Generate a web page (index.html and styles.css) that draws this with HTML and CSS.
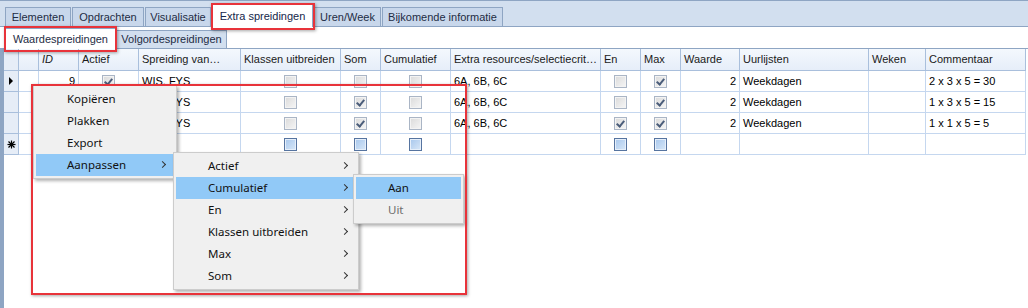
FILE: index.html
```html
<!DOCTYPE html>
<html lang="nl">
<head>
    <meta charset="UTF-8">
    <title>Extra spreidingen</title>
    <link rel="stylesheet" href="styles.css">
</head>
<body>
    <div class="page">
        <!-- Main tabs -->
        <div class="tabstrip">
            <div class="tab" style="width:66px">Elementen</div>
            <div class="tab" style="width:72px">Opdrachten</div>
            <div class="tab" style="width:66px">Visualisatie</div>
            <div class="tab active" style="width:101px">Extra spreidingen</div>
            <div class="tab" style="width:67px">Uren/Week</div>
            <div class="tab" style="width:121px">Bijkomende informatie</div>
        </div>

        <!-- Sub tabs -->
        <div class="subtabs">
            <div class="subtab active">Waardespreidingen</div>
            <div class="subtab">Volgordespreidingen</div>
        </div>

        <!-- Grid -->
        <div class="grid">
            <div class="row head">
                <div class="cell ind"></div>
                <div class="cell"></div>
                <div class="cell"><i>ID</i></div>
                <div class="cell">Actief</div>
                <div class="cell">Spreiding van…</div>
                <div class="cell">Klassen uitbreiden</div>
                <div class="cell">Som</div>
                <div class="cell">Cumulatief</div>
                <div class="cell">Extra resources/selectiecrit…</div>
                <div class="cell">En</div>
                <div class="cell">Max</div>
                <div class="cell">Waarde</div>
                <div class="cell">Uurlijsten</div>
                <div class="cell">Weken</div>
                <div class="cell">Commentaar</div>
            </div>

            <div class="row">
                <div class="cell ind">
                    <svg width="5" height="8" viewBox="0 0 5 8"><polygon points="0,0 4,4 0,8" fill="#000"/></svg>
                </div>
                <div class="cell"></div>
                <div class="cell num">9</div>
                <div class="cell mid"><span class="cb on"></span></div>
                <div class="cell">WIS, FYS</div>
                <div class="cell mid"><span class="cb"></span></div>
                <div class="cell mid"><span class="cb"></span></div>
                <div class="cell mid"><span class="cb"></span></div>
                <div class="cell">6A, 6B, 6C</div>
                <div class="cell mid"><span class="cb"></span></div>
                <div class="cell mid"><span class="cb on"></span></div>
                <div class="cell num">2</div>
                <div class="cell">Weekdagen</div>
                <div class="cell"></div>
                <div class="cell">2 x 3 x 5 = 30</div>
            </div>

            <div class="row">
                <div class="cell ind"></div>
                <div class="cell"></div>
                <div class="cell"></div>
                <div class="cell"></div>
                <div class="cell">WIS, FYS</div>
                <div class="cell mid"><span class="cb"></span></div>
                <div class="cell mid"><span class="cb on"></span></div>
                <div class="cell mid"><span class="cb"></span></div>
                <div class="cell">6A, 6B, 6C</div>
                <div class="cell mid"><span class="cb"></span></div>
                <div class="cell mid"><span class="cb on"></span></div>
                <div class="cell num">2</div>
                <div class="cell">Weekdagen</div>
                <div class="cell"></div>
                <div class="cell">1 x 3 x 5 = 15</div>
            </div>

            <div class="row">
                <div class="cell ind"></div>
                <div class="cell"></div>
                <div class="cell"></div>
                <div class="cell"></div>
                <div class="cell">WIS, FYS</div>
                <div class="cell mid"><span class="cb"></span></div>
                <div class="cell mid"><span class="cb on"></span></div>
                <div class="cell mid"><span class="cb"></span></div>
                <div class="cell">6A, 6B, 6C</div>
                <div class="cell mid"><span class="cb on"></span></div>
                <div class="cell mid"><span class="cb on"></span></div>
                <div class="cell num">2</div>
                <div class="cell">Weekdagen</div>
                <div class="cell"></div>
                <div class="cell">1 x 1 x 5 = 5</div>
            </div>

            <div class="row">
                <div class="cell ind">
                    <svg width="9" height="9" viewBox="0 0 9 9" stroke="#000" stroke-width="1.2">
                        <line x1="4.5" y1="0.5" x2="4.5" y2="8.5"/>
                        <line x1="0.5" y1="4.5" x2="8.5" y2="4.5"/>
                        <line x1="1.5" y1="1.5" x2="7.5" y2="7.5"/>
                        <line x1="7.5" y1="1.5" x2="1.5" y2="7.5"/>
                    </svg>
                </div>
                <div class="cell"></div>
                <div class="cell"></div>
                <div class="cell"></div>
                <div class="cell"></div>
                <div class="cell mid"><span class="cb new"></span></div>
                <div class="cell mid"><span class="cb new"></span></div>
                <div class="cell mid"><span class="cb new"></span></div>
                <div class="cell"></div>
                <div class="cell mid"><span class="cb new"></span></div>
                <div class="cell mid"><span class="cb new"></span></div>
                <div class="cell"></div>
                <div class="cell"></div>
                <div class="cell"></div>
                <div class="cell"></div>
            </div>
        </div>

        <!-- Context menu -->
        <div class="menu menu-main">
            <div class="item">Kopiëren</div>
            <div class="item">Plakken</div>
            <div class="item">Export</div>
            <div class="item hover">Aanpassen <span class="arrow"></span></div>
        </div>

        <div class="menu menu-sub">
            <div class="item">Actief <span class="arrow"></span></div>
            <div class="item hover">Cumulatief <span class="arrow"></span></div>
            <div class="item">En <span class="arrow"></span></div>
            <div class="item">Klassen uitbreiden <span class="arrow"></span></div>
            <div class="item">Max <span class="arrow"></span></div>
            <div class="item">Som <span class="arrow"></span></div>
        </div>

        <div class="menu menu-val">
            <div class="item hover">Aan</div>
            <div class="item off">Uit</div>
        </div>

        <!-- Red highlight marks -->
        <div class="mark mark-tab"></div>
        <div class="mark mark-subtab"></div>
        <div class="mark mark-menu"></div>
    </div>
</body>
</html>
```

FILE: styles.css
```css
body {
    margin: 0;
    background: white;
    font-family: "Liberation Sans", Arial, sans-serif;
    font-size: 11px;
    color: #000;
    overflow: hidden;
}
.page {
    position: relative;
    width: 1028px;
    height: 308px;
}

/* Main tabs */
.tabstrip {
    height: 25px;
    border-top: 1px solid #8ea5c3;
    border-bottom: 1px solid #8ea5c3;
    background: #d2dfef;
    display: flex;
    align-items: flex-end;
    padding-left: 5px;
}
.tab {
    box-sizing: border-box;
    height: 19px;
    margin-right: 1px;
    border: 1px solid #8ea5c3;
    border-bottom: none;
    background: #c8d7eb;
    color: #1e2c44;
    text-align: center;
    line-height: 18px;
    white-space: nowrap;
}
.tab.active {
    height: 23px;
    margin-bottom: -1px;
    background: white;
    color: #15264a;
    line-height: 22px;
}

/* Sub tabs */
.subtabs {
    height: 21px;
    border-bottom: 1px solid #8ea5c3;
    display: flex;
    align-items: flex-end;
    padding-left: 5px;
}
.subtab {
    box-sizing: border-box;
    width: 111px;
    height: 18px;
    border: 1px solid #8ea5c3;
    border-bottom: none;
    background: #d2dfef;
    color: #1e2c44;
    text-align: center;
    line-height: 17px;
}
.subtab.active {
    height: 21px;
    margin-bottom: -1px;
    background: white;
    line-height: 21px;
}

/* Grid */
.grid {
    border-left: 4px solid #8ea5c3;
    height: 259px;
}
.row {
    display: grid;
    grid-template-columns: 15px 20px 40px 60px 102px 100px 40px 70px 150px 40px 40px 59px 129px 57px 100px;
    height: 21px;
}
.row.head {
    height: 22px;
}
.cell {
    box-sizing: border-box;
    border-right: 1px solid #c5d7ef;
    border-bottom: 1px solid #c5d7ef;
    padding: 0 3px;
    line-height: 20px;
    white-space: nowrap;
    overflow: hidden;
    text-overflow: clip;
}
.head .cell {
    background: linear-gradient(#f4f8fd, #e6eef9);
    border-right-color: #a9bfdc;
    border-bottom-color: #a9bfdc;
    line-height: 21px;
    color: #1a1a1a;
}
.cell.ind {
    background: #e6edf7;
    border-right-color: #a9bfdc;
    border-bottom-color: #a9bfdc;
    padding: 0;
    display: flex;
    align-items: center;
    justify-content: center;
}
.cell.num {
    text-align: right;
}
.cell.mid {
    display: flex;
    align-items: center;
    justify-content: center;
    padding: 0;
}

/* Checkboxes */
.cb {
    box-sizing: border-box;
    width: 13px;
    height: 13px;
    border: 1px solid #aab5c5;
    background: linear-gradient(135deg, #dadada, #f6f6f6);
    box-shadow: inset 0 0 0 1px #f3f3f3;
    position: relative;
}
.cb.on::after {
    content: "";
    position: absolute;
    left: 3px;
    top: 1px;
    width: 3px;
    height: 6px;
    border: solid #4b5d7a;
    border-width: 0 2px 2px 0;
    transform: rotate(40deg);
}
.cb.new {
    border-color: #5674a0;
    background: linear-gradient(135deg, #a6c6ec, #d9e8f8);
    box-shadow: inset 0 0 0 1px #e6effa;
}

/* Context menus */
.menu {
    position: absolute;
    box-sizing: border-box;
    background: #f0f0f0;
    border: 1px solid #cccccc;
    padding: 2px;
    box-shadow: 2px 2px 3px rgba(0, 0, 0, 0.3);
    font-family: "Noto Sans", "Open Sans", sans-serif;
    font-size: 11.5px;
    color: #111;
}
.menu-main {
    left: 33px;
    top: 85px;
    width: 144px;
}
.menu-sub {
    left: 173px;
    top: 152px;
    width: 186px;
}
.menu-val {
    left: 353px;
    top: 174px;
    width: 111px;
}
.item {
    position: relative;
    height: 22px;
    line-height: 22px;
    padding-left: 31px;
    white-space: nowrap;
}
.menu-sub .item,
.menu-val .item {
    padding-left: 32px;
}
.item.hover {
    background: #91c9f7;
}
.item.off {
    color: #6d6d6d;
}
.arrow {
    position: absolute;
    right: 9px;
    top: 8px;
    width: 4px;
    height: 4px;
    border: solid #333;
    border-width: 1px 1px 0 0;
    transform: rotate(45deg);
}

/* Red highlight marks */
.mark {
    position: absolute;
    box-sizing: border-box;
    border: 2px solid #e8333a;
    box-shadow: 1px 1px 3px rgba(0, 0, 0, 0.35);
}
.mark-tab {
    left: 211px;
    top: 3px;
    width: 104px;
    height: 27px;
}
.mark-subtab {
    left: 4px;
    top: 26px;
    width: 113px;
    height: 26px;
}
.mark-menu {
    left: 31px;
    top: 84px;
    width: 436px;
    height: 211px;
}
```
